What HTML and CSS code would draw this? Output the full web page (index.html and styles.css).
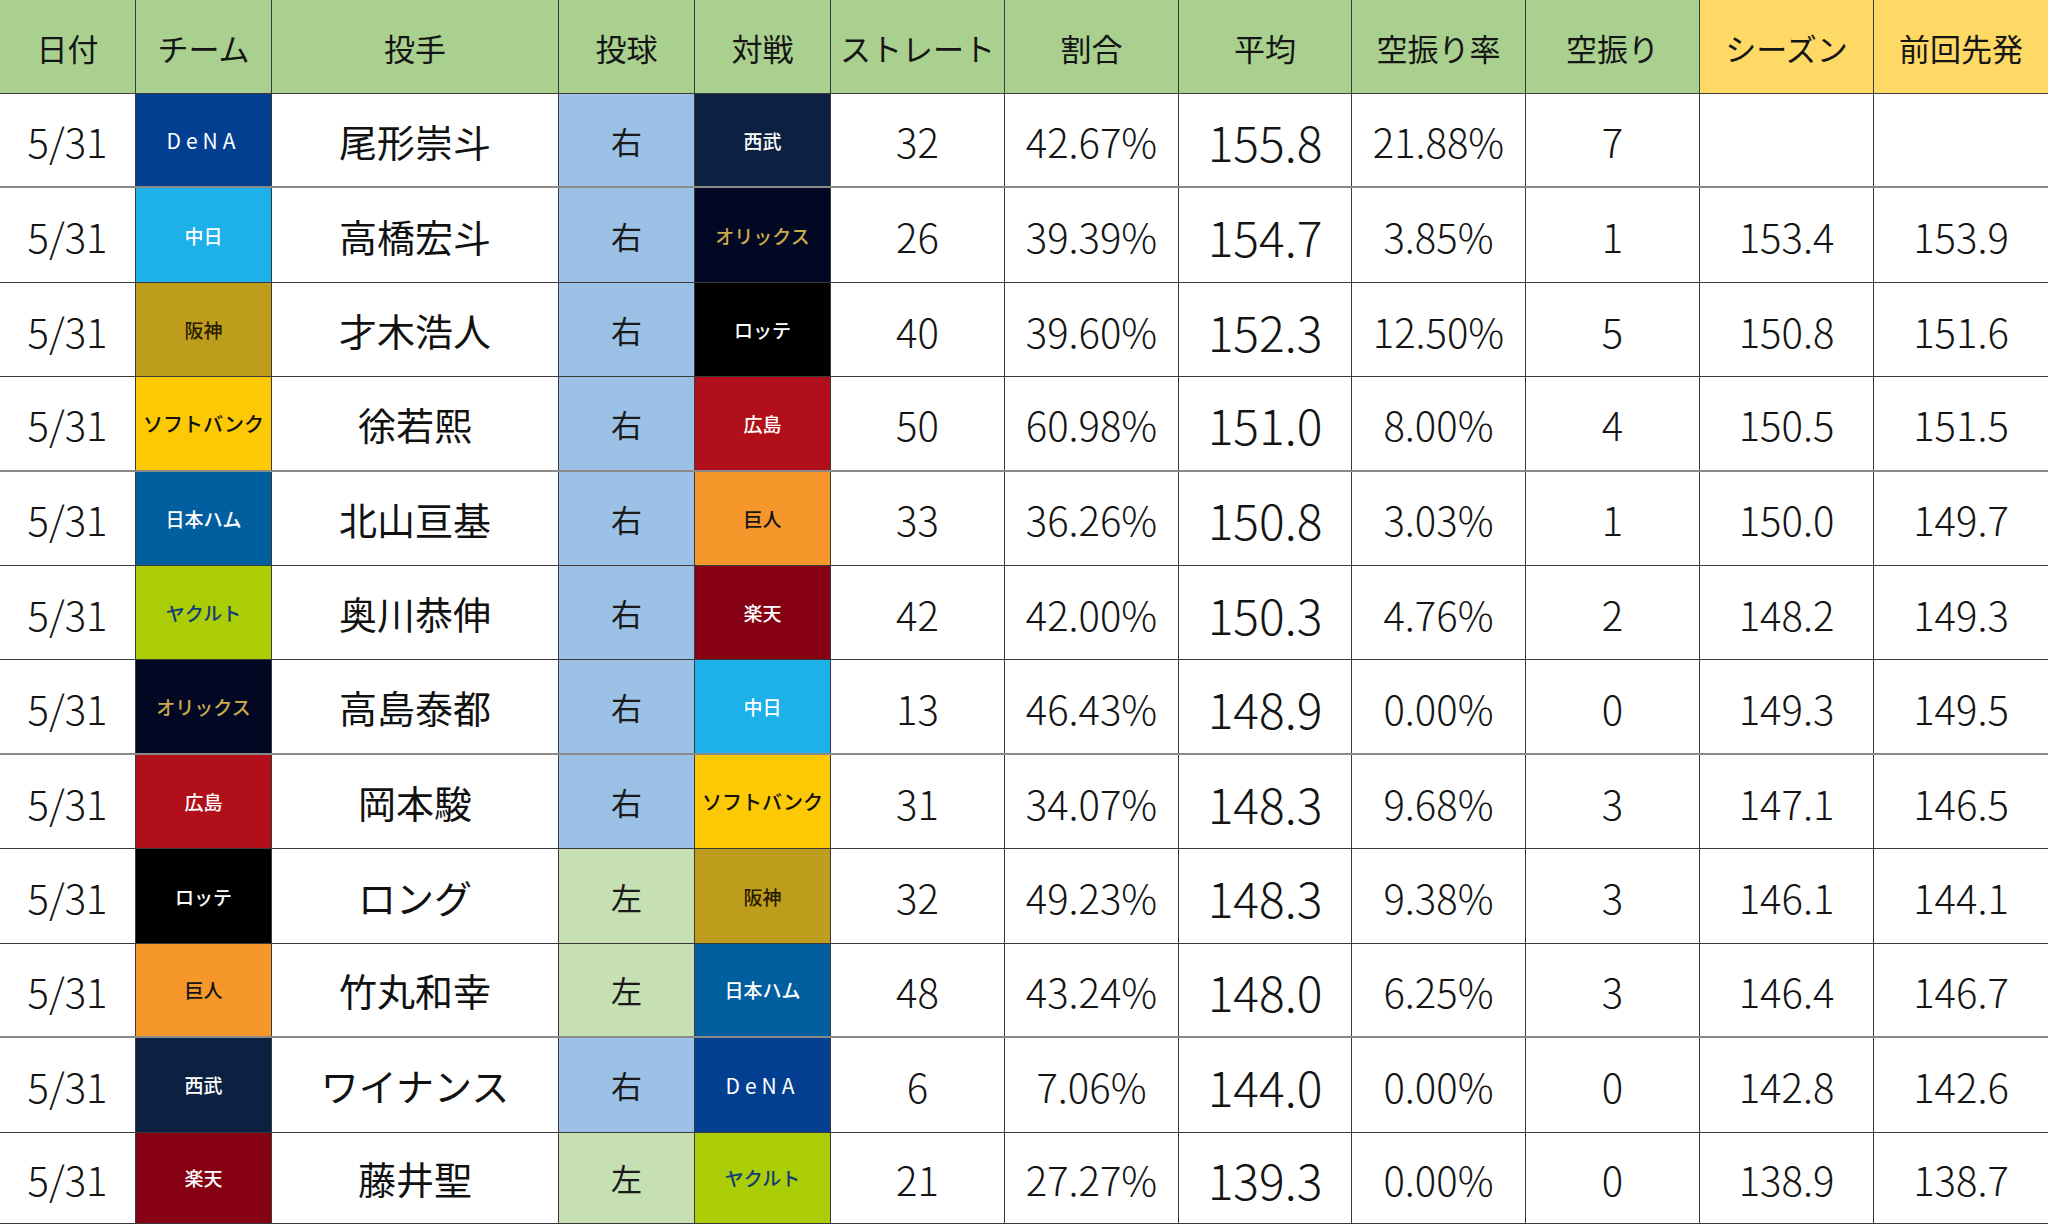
FILE: index.html
```html
<!DOCTYPE html>
<html lang="ja">
<head>
<meta charset="utf-8">
<title>ストレート平均球速</title>
<link rel="stylesheet" href="styles.css">
</head>
<body>
<div class="table">
  <div class="row head">
    <div class="c">日付</div>
    <div class="c">チーム</div>
    <div class="c">投手</div>
    <div class="c">投球</div>
    <div class="c">対戦</div>
    <div class="c">ストレート</div>
    <div class="c">割合</div>
    <div class="c">平均</div>
    <div class="c">空振り率</div>
    <div class="c">空振り</div>
    <div class="c y">シーズン</div>
    <div class="c y">前回先発</div>
  </div>

  <div class="row sep">
    <div class="c num">5/31</div>
    <div class="c team dena">DeNA</div>
    <div class="c name">尾形崇斗</div>
    <div class="c hand r">右</div>
    <div class="c team seibu">西武</div>
    <div class="c num">32</div>
    <div class="c num">42.67%</div>
    <div class="c num big">155.8</div>
    <div class="c num">21.88%</div>
    <div class="c num">7</div>
    <div class="c num"></div>
    <div class="c num"></div>
  </div>

  <div class="row">
    <div class="c num">5/31</div>
    <div class="c team chunichi">中日</div>
    <div class="c name">高橋宏斗</div>
    <div class="c hand r">右</div>
    <div class="c team orix">オリックス</div>
    <div class="c num">26</div>
    <div class="c num">39.39%</div>
    <div class="c num big">154.7</div>
    <div class="c num">3.85%</div>
    <div class="c num">1</div>
    <div class="c num">153.4</div>
    <div class="c num">153.9</div>
  </div>

  <div class="row">
    <div class="c num">5/31</div>
    <div class="c team hanshin">阪神</div>
    <div class="c name">才木浩人</div>
    <div class="c hand r">右</div>
    <div class="c team lotte">ロッテ</div>
    <div class="c num">40</div>
    <div class="c num">39.60%</div>
    <div class="c num big">152.3</div>
    <div class="c num">12.50%</div>
    <div class="c num">5</div>
    <div class="c num">150.8</div>
    <div class="c num">151.6</div>
  </div>

  <div class="row sep">
    <div class="c num">5/31</div>
    <div class="c team sb">ソフトバンク</div>
    <div class="c name">徐若熙</div>
    <div class="c hand r">右</div>
    <div class="c team hiroshima">広島</div>
    <div class="c num">50</div>
    <div class="c num">60.98%</div>
    <div class="c num big">151.0</div>
    <div class="c num">8.00%</div>
    <div class="c num">4</div>
    <div class="c num">150.5</div>
    <div class="c num">151.5</div>
  </div>

  <div class="row">
    <div class="c num">5/31</div>
    <div class="c team nham">日本ハム</div>
    <div class="c name">北山亘基</div>
    <div class="c hand r">右</div>
    <div class="c team giants">巨人</div>
    <div class="c num">33</div>
    <div class="c num">36.26%</div>
    <div class="c num big">150.8</div>
    <div class="c num">3.03%</div>
    <div class="c num">1</div>
    <div class="c num">150.0</div>
    <div class="c num">149.7</div>
  </div>

  <div class="row">
    <div class="c num">5/31</div>
    <div class="c team yakult">ヤクルト</div>
    <div class="c name">奥川恭伸</div>
    <div class="c hand r">右</div>
    <div class="c team rakuten">楽天</div>
    <div class="c num">42</div>
    <div class="c num">42.00%</div>
    <div class="c num big">150.3</div>
    <div class="c num">4.76%</div>
    <div class="c num">2</div>
    <div class="c num">148.2</div>
    <div class="c num">149.3</div>
  </div>

  <div class="row sep">
    <div class="c num">5/31</div>
    <div class="c team orix">オリックス</div>
    <div class="c name">高島泰都</div>
    <div class="c hand r">右</div>
    <div class="c team chunichi">中日</div>
    <div class="c num">13</div>
    <div class="c num">46.43%</div>
    <div class="c num big">148.9</div>
    <div class="c num">0.00%</div>
    <div class="c num">0</div>
    <div class="c num">149.3</div>
    <div class="c num">149.5</div>
  </div>

  <div class="row">
    <div class="c num">5/31</div>
    <div class="c team hiroshima">広島</div>
    <div class="c name">岡本駿</div>
    <div class="c hand r">右</div>
    <div class="c team sb">ソフトバンク</div>
    <div class="c num">31</div>
    <div class="c num">34.07%</div>
    <div class="c num big">148.3</div>
    <div class="c num">9.68%</div>
    <div class="c num">3</div>
    <div class="c num">147.1</div>
    <div class="c num">146.5</div>
  </div>

  <div class="row">
    <div class="c num">5/31</div>
    <div class="c team lotte">ロッテ</div>
    <div class="c name">ロング</div>
    <div class="c hand l">左</div>
    <div class="c team hanshin">阪神</div>
    <div class="c num">32</div>
    <div class="c num">49.23%</div>
    <div class="c num big">148.3</div>
    <div class="c num">9.38%</div>
    <div class="c num">3</div>
    <div class="c num">146.1</div>
    <div class="c num">144.1</div>
  </div>

  <div class="row sep">
    <div class="c num">5/31</div>
    <div class="c team giants">巨人</div>
    <div class="c name">竹丸和幸</div>
    <div class="c hand l">左</div>
    <div class="c team nham">日本ハム</div>
    <div class="c num">48</div>
    <div class="c num">43.24%</div>
    <div class="c num big">148.0</div>
    <div class="c num">6.25%</div>
    <div class="c num">3</div>
    <div class="c num">146.4</div>
    <div class="c num">146.7</div>
  </div>

  <div class="row">
    <div class="c num">5/31</div>
    <div class="c team seibu">西武</div>
    <div class="c name">ワイナンス</div>
    <div class="c hand r">右</div>
    <div class="c team dena">DeNA</div>
    <div class="c num">6</div>
    <div class="c num">7.06%</div>
    <div class="c num big">144.0</div>
    <div class="c num">0.00%</div>
    <div class="c num">0</div>
    <div class="c num">142.8</div>
    <div class="c num">142.6</div>
  </div>

  <div class="row last">
    <div class="c num">5/31</div>
    <div class="c team rakuten">楽天</div>
    <div class="c name">藤井聖</div>
    <div class="c hand l">左</div>
    <div class="c team yakult">ヤクルト</div>
    <div class="c num">21</div>
    <div class="c num">27.27%</div>
    <div class="c num big">139.3</div>
    <div class="c num">0.00%</div>
    <div class="c num">0</div>
    <div class="c num">138.9</div>
    <div class="c num">138.7</div>
  </div>
</div>
</body>
</html>
```

FILE: styles.css
```css
html, body {
  margin: 0;
  padding: 0;
  background: #ffffff;
}

body {
  font-family: "Noto Sans CJK JP", "Noto Sans", sans-serif;
  color: #111111;
}

.table {
  width: 2048px;
  height: 1227px;
  display: grid;
  grid-template-rows: 94px repeat(12, 1fr);
}

.row {
  display: grid;
  grid-template-columns: 136px 136px 287px 136px 136px 174px 174px 173px 174px 174px 174px 174px;
  border-bottom: 1px solid #3a3a3a;
  box-sizing: border-box;
}

.row.sep {
  border-bottom: 2px solid #8a8a8a;
}

.row.last {
  border-bottom: 1px solid #3a3a3a;
  margin-bottom: 3px;
}

.c {
  display: flex;
  align-items: center;
  justify-content: center;
  border-right: 1px solid #3a3a3a;
  box-sizing: border-box;
  white-space: nowrap;
  overflow: hidden;
}

.c:last-child {
  border-right: none;
}

.head .c {
  background: #a9d08e;
  font-size: 31px;
  font-weight: 400;
  color: #151515;
  padding-top: 2px;
}

.head .c.y {
  background: #ffd966;
}

.num {
  font-size: 40px;
  font-weight: 300;
  color: #141414;
  padding-top: 2px;
}

.num.big {
  font-size: 48px;
}

.name {
  font-size: 38px;
  font-weight: 400;
  color: #111111;
}

.hand {
  font-size: 31px;
  font-weight: 400;
  color: #1a1a1a;
}

.hand.r {
  background: #9bc2e6;
}

.hand.l {
  background: #c6e0b4;
}

.team {
  font-size: 19px;
  font-weight: 500;
}

.dena { background: #033f91; color: #ffffff; letter-spacing: 5px; font-size: 21px; font-weight: 400; }
.seibu { background: #0c2142; color: #ffffff; }
.chunichi { background: #1eb0e8; color: #ffffff; }
.orix { background: #020724; color: #c9aa4c; }
.hanshin { background: #bf9d1c; color: #2a1c00; }
.lotte { background: #000000; color: #ffffff; }
.sb { background: #fdc804; color: #111111; font-size: 20px; }
.hiroshima { background: #b10f19; color: #ffffff; }
.nham { background: #025f9f; color: #ffffff; }
.giants { background: #f6972b; color: #141414; }
.yakult { background: #aacd05; color: #143b7a; }
.rakuten { background: #850013; color: #ffffff; }
```
